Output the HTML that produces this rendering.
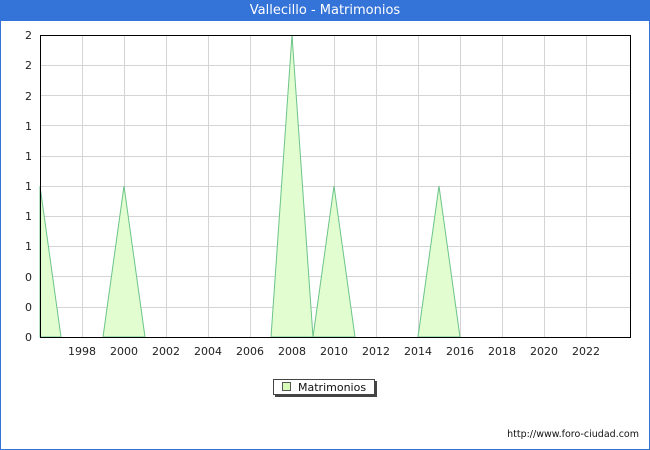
<!DOCTYPE html>
<html><head><meta charset="utf-8"><style>
body{margin:0;width:650px;height:450px;overflow:hidden;font-family:"DejaVu Sans","Liberation Sans",sans-serif;background:#fff}
.frame{position:absolute;left:0;top:0;width:648px;height:448px;border:1px solid #3473d8;}
.title{position:absolute;left:0;top:0;width:650px;height:21px;background:#3473d8;color:#fff;font-size:13px;text-align:center;line-height:22px}
</style></head><body>
<div class="frame"></div>
<div class="title">Vallecillo - Matrimonios</div>
<svg width="650" height="450" style="position:absolute;left:0;top:0">
<g stroke="#d4d4d4" stroke-width="1">
<line x1="40" y1="65.5" x2="630" y2="65.5"/><line x1="40" y1="95.5" x2="630" y2="95.5"/><line x1="40" y1="125.5" x2="630" y2="125.5"/><line x1="40" y1="156.5" x2="630" y2="156.5"/><line x1="40" y1="186.5" x2="630" y2="186.5"/><line x1="40" y1="216.5" x2="630" y2="216.5"/><line x1="40" y1="246.5" x2="630" y2="246.5"/><line x1="40" y1="276.5" x2="630" y2="276.5"/><line x1="40" y1="307.5" x2="630" y2="307.5"/>
<line x1="82.5" y1="35" x2="82.5" y2="337"/><line x1="124.5" y1="35" x2="124.5" y2="337"/><line x1="166.5" y1="35" x2="166.5" y2="337"/><line x1="208.5" y1="35" x2="208.5" y2="337"/><line x1="250.5" y1="35" x2="250.5" y2="337"/><line x1="292.5" y1="35" x2="292.5" y2="337"/><line x1="334.5" y1="35" x2="334.5" y2="337"/><line x1="376.5" y1="35" x2="376.5" y2="337"/><line x1="418.5" y1="35" x2="418.5" y2="337"/><line x1="460.5" y1="35" x2="460.5" y2="337"/><line x1="502.5" y1="35" x2="502.5" y2="337"/><line x1="544.5" y1="35" x2="544.5" y2="337"/><line x1="586.5" y1="35" x2="586.5" y2="337"/>
</g>
<g fill="#e2fdd0" stroke="#6cc48a" stroke-width="1">
<polygon points="40,186 61,337 40,337"/>
<polygon points="103,337 124,186 145,337"/>
<polygon points="271,337 292,35 313,337 334,186 355,337"/>
<polygon points="418,337 439,186 460,337"/>
</g>
<rect x="40.5" y="35.5" width="590" height="302" fill="none" stroke="#000"/>
<g font-size="11" fill="#222" text-anchor="end">
<text x="32" y="39">2</text><text x="32" y="69">2</text><text x="32" y="100">2</text><text x="32" y="130">1</text><text x="32" y="160">1</text><text x="32" y="190">1</text><text x="32" y="220">1</text><text x="32" y="250">1</text><text x="32" y="281">0</text><text x="32" y="311">0</text><text x="32" y="341">0</text>
</g>
<g font-size="11" fill="#222" text-anchor="middle">
<text x="82" y="355">1998</text><text x="124" y="355">2000</text><text x="166" y="355">2002</text><text x="208" y="355">2004</text><text x="250" y="355">2006</text><text x="292" y="355">2008</text><text x="334" y="355">2010</text><text x="376" y="355">2012</text><text x="418" y="355">2014</text><text x="460" y="355">2016</text><text x="502" y="355">2018</text><text x="544" y="355">2020</text><text x="586" y="355">2022</text>
</g>
<rect x="275" y="381" width="102" height="16" fill="#444"/>
<rect x="273.5" y="379.5" width="101" height="15" fill="#fff" stroke="#444"/>
<rect x="282.5" y="382.5" width="8" height="8" fill="#d8fcb8" stroke="#555"/>
<text x="298" y="391" font-size="11" fill="#111">Matrimonios</text>
<text x="639" y="437" font-size="9.5" fill="#111" text-anchor="end">http://www.foro-ciudad.com</text>
</svg>
</body></html>
